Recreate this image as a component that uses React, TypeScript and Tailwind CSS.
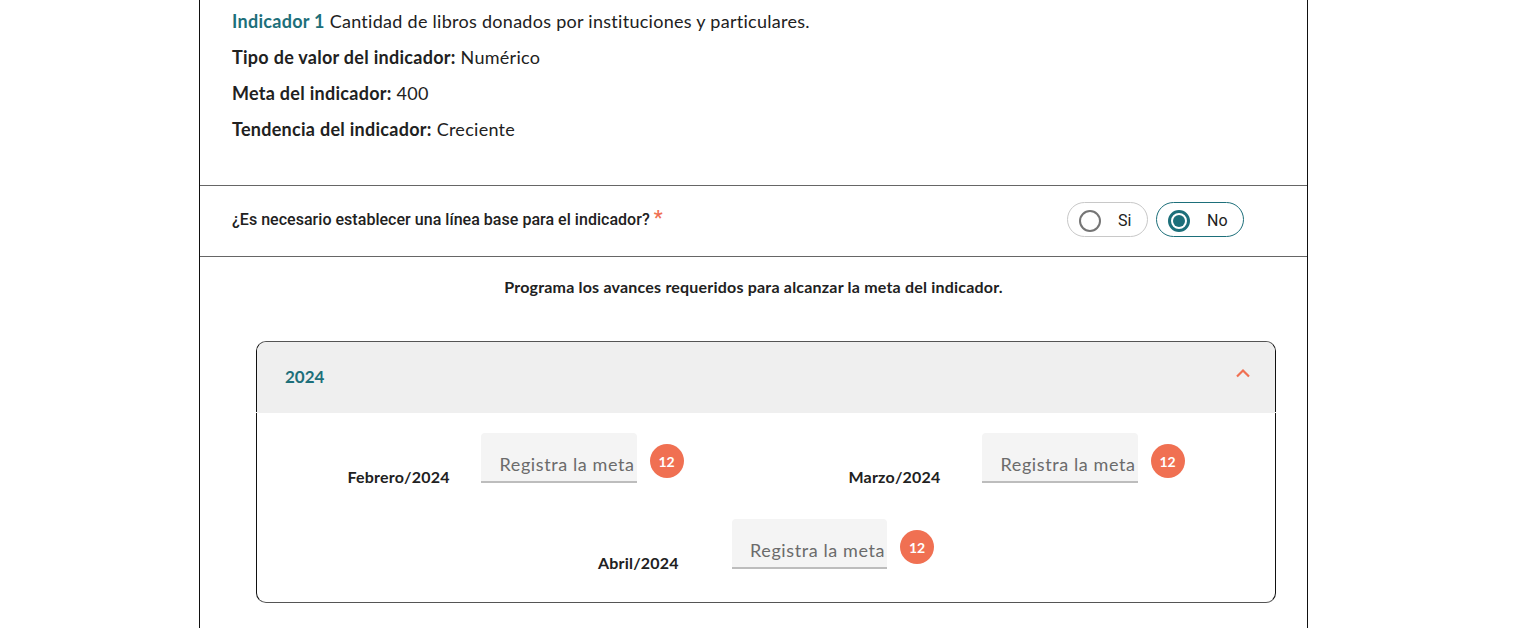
const lato = "font-['Lato',sans-serif]";

function MetaField({ label }: { label: string }) {
  return (
    <div className="flex w-[501px] items-start">
      <label className="w-[216px] pt-[34px] pl-[82.5px] text-[16px] leading-[20px] font-bold tracking-[0.2px] text-[#212121]">{label}</label>
      <div className="h-[50px] w-[155.5px] rounded-t-[4px] border-b-2 border-[#bdbdbd] bg-[#f4f4f4] pt-[19px] pl-[18.5px] text-[18px] leading-[24px] tracking-[0.6px] whitespace-nowrap text-[#6b6b6b]">
        Registra la meta
      </div>
      <span className="mt-[11px] ml-[13px] flex h-[34px] w-[34px] items-center justify-center rounded-full bg-[#f07052] text-[14px] font-bold text-white">12</span>
    </div>
  );
}

export default function App() {
  return (
    <div className={`${lato} ml-[199px] h-[628px] w-[1109px] overflow-hidden border-x border-[#111] bg-white text-[#212121]`}>
      <section className="h-[185px] pt-[3px] pl-[32px] text-[18px] leading-[36px] tracking-[0.28px]">
        <p><span className="font-bold text-[#1d6f7a]">Indicador 1</span> Cantidad de libros donados por instituciones y particulares.</p>
        <p><b>Tipo de valor del indicador:</b> Numérico</p>
        <p><b>Meta del indicador:</b> 400</p>
        <p><b>Tendencia del indicador:</b> Creciente</p>
      </section>

      <section className="flex h-[72px] items-center justify-between border-y border-[#666] pr-[63px] pb-[4px] pl-[32px]">
        <p className="mt-[2px] font-['Roboto',sans-serif] text-[16px] font-medium tracking-[0.03px]">
          ¿Es necesario establecer una línea base para el indicador? <span className="text-[20px] leading-[20px] text-[#f07052]">*</span>
        </p>
        <div className="flex gap-[8px] font-['Roboto',sans-serif] text-[16px]">
          <div className="flex h-[35px] w-[81px] items-center gap-[17px] rounded-full border border-[#c8c8c8] pt-[3px] pl-[11px]">
            <span className="h-[22px] w-[22px] rounded-full border-2 border-[#757575]" />
            Si
          </div>
          <div className="flex h-[35px] w-[88px] items-center gap-[17px] rounded-full border border-[#1d6f7a] pt-[3px] pl-[11px]">
            <span className="flex h-[22px] w-[22px] items-center justify-center rounded-full border-[3px] border-[#1d6f7a]">
              <span className="h-[12px] w-[12px] rounded-full bg-[#1d6f7a]" />
            </span>
            No
          </div>
        </div>
      </section>

      <p className="pt-[20px] text-center text-[16px] leading-[20px] font-bold tracking-[0.2px]">Programa los avances requeridos para alcanzar la meta del indicador.</p>

      <section className="mt-[44px] ml-[56px] h-[262px] w-[1020px] rounded-[10px] border border-[#555] border-x-[#111]">
        <div className="flex h-[70px] items-center justify-between rounded-t-[10px] bg-[#efefef] pr-[25px] pl-[28px]">
          <span className="text-[17px] font-bold text-[#1d6f7a]">2024</span>
          <svg width="14" height="10" viewBox="0 0 14 10" fill="none" stroke="#f07052" strokeWidth="2.2" className="mb-[9px]">
            <path d="M1 8.5l6-6 6 6" />
          </svg>
        </div>
        <div className="-mx-px h-px bg-[#efefef]" />
        <div className="flex flex-wrap justify-center pt-[20px]">
          <MetaField label="Febrero/2024" />
          <MetaField label="Marzo/2024" />
          <div className="mt-[32px]"><MetaField label="Abril/2024" /></div>
        </div>
      </section>
    </div>
  );
}
